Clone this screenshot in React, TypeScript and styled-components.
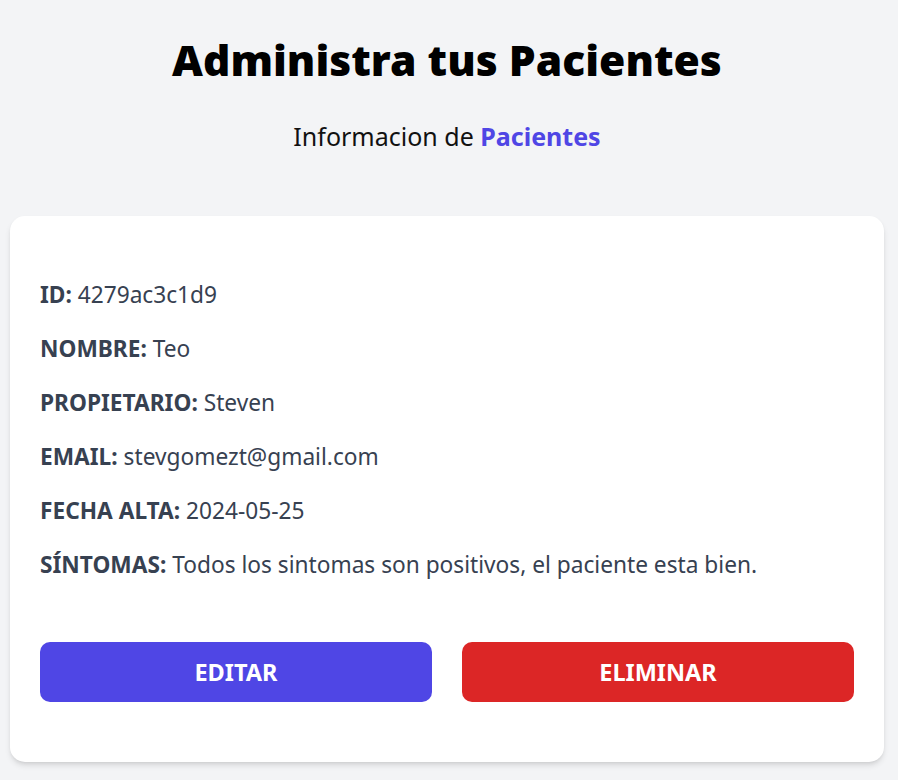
import styled, { createGlobalStyle } from 'styled-components';

const GlobalStyle = createGlobalStyle`
  body {
    margin: 0;
    background: #f3f4f6;
    font-family: "Noto Sans", "Open Sans", sans-serif;
  }
`;

const Page = styled.div`
  width: 898px;
  min-height: 780px;
  box-sizing: border-box;
  padding: 0 14px 0 10px;
`;

const Title = styled.h2`
  margin: 0;
  padding-top: 31px;
  font-size: 42.6px;
  line-height: 56px;
  font-weight: 900;
  color: #000;
  text-align: center;
`;

const Subtitle = styled.p`
  margin: 32px 0 0;
  font-size: 25px;
  line-height: 34px;
  color: #111;
  text-align: center;
`;

const Highlight = styled.span`
  color: #4f46e5;
  font-weight: 700;
`;

const Card = styled.div`
  margin-top: 63px;
  background: #fff;
  border-radius: 15px;
  box-shadow: 0 4px 6px -1px rgba(0, 0, 0, 0.12), 0 2px 4px -2px rgba(0, 0, 0, 0.1);
  padding: 62px 30px 60px;
`;

const Row = styled.p`
  margin: 0 0 20px;
  font-size: 22.7px;
  line-height: 34px;
  color: #374151;
`;

const Label = styled.span`
  font-weight: 700;
`;

const Actions = styled.div`
  display: grid;
  grid-template-columns: 1fr 1fr;
  gap: 30px;
  margin-top: 60px;
`;

const Button = styled.button<{ $variant: 'edit' | 'delete' }>`
  height: 60px;
  border: none;
  border-radius: 10px;
  background: ${(p) => (p.$variant === 'edit' ? '#4f46e5' : '#dc2626')};
  color: #fff;
  font-family: inherit;
  font-size: 23.5px;
  font-weight: 700;
  text-transform: uppercase;
  cursor: pointer;
`;

const paciente = {
  id: '4279ac3c1d9',
  nombre: 'Teo',
  propietario: 'Steven',
  email: 'stevgomezt@gmail.com',
  fecha: '2024-05-25',
  sintomas: 'Todos los sintomas son positivos, el paciente esta bien.',
};

export default function App() {
  return (
    <Page>
      <GlobalStyle />
      <Title>Administra tus Pacientes</Title>
      <Subtitle>
        Informacion de <Highlight>Pacientes</Highlight>
      </Subtitle>

      <Card>
        <Row><Label>ID:</Label> {paciente.id}</Row>
        <Row><Label>NOMBRE:</Label> {paciente.nombre}</Row>
        <Row><Label>PROPIETARIO:</Label> {paciente.propietario}</Row>
        <Row><Label>EMAIL:</Label> {paciente.email}</Row>
        <Row><Label>FECHA ALTA:</Label> {paciente.fecha}</Row>
        <Row><Label>SÍNTOMAS:</Label> {paciente.sintomas}</Row>

        <Actions>
          <Button $variant="edit">Editar</Button>
          <Button $variant="delete">Eliminar</Button>
        </Actions>
      </Card>
    </Page>
  );
}
